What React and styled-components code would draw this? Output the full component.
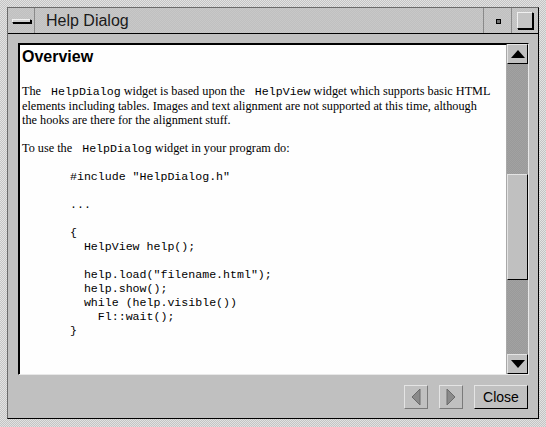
import React from 'react';
import styled, { createGlobalStyle } from 'styled-components';

const GlobalStyle = createGlobalStyle`
  html, body {
    margin: 0;
    padding: 0;
    background: #c0c0c0;
  }
`;

const stipple = (a, b) => `
  background-color: ${a};
  background-image: repeating-conic-gradient(${a} 0 25%, ${b} 0 50%);
  background-size: 2px 2px;
`;

const Frame = styled.div`
  width: 546px;
  height: 427px;
  box-sizing: border-box;
  padding: 7px 7px 8px 7px;
  ${stipple('#c4c4c4', '#e2e2e2')}
  display: flex;
`;

const Inner = styled.div`
  flex: 1;
  display: flex;
  flex-direction: column;
  border-top: 1px solid #6a6a6a;
  border-left: 1px solid #6a6a6a;
  border-right: 1px solid #000;
  border-bottom: 1px solid #000;
  background: #c0c0c0;
`;

const TitleBar = styled.div`
  height: 25px;
  display: flex;
  border-bottom: 1px solid #000;
  ${stipple('#c0c0c0', '#c8c8c8')}
`;

const TitleButton = styled.div`
  width: ${({ w }) => w}px;
  display: grid;
  place-items: center;
  border-left: ${({ left }) => (left ? '1px solid #8a8a8a' : 'none')};
  border-right: ${({ right }) => (right ? '1px solid #8a8a8a' : 'none')};
`;

const MenuBar = styled.div`
  width: 17px;
  height: 2px;
  background: #d0d0d0;
  border: 1px solid #000;
  border-top-color: #f0f0f0;
  border-left-color: #f0f0f0;
  box-shadow: 1px 1px 0 #000;
  margin-left: 1px;
`;

const Dot = styled.div`
  width: 3px;
  height: 3px;
  border: 1px solid #000;
  background: #707070;
  margin-left: 1px;
  margin-top: 1px;
`;

const MaxBox = styled.div`
  width: 14px;
  height: 15px;
  border: 1px solid #f0f0f0;
  border-right-color: #000;
  border-bottom-color: #000;
  box-shadow: 1px 1px 0 #000;
  background: #c4c4c4;
`;

const Title = styled.div`
  flex: 1;
  padding-left: 11px;
  font-family: 'Liberation Sans', Arial, sans-serif;
  font-size: 16px;
  line-height: 25px;
  color: #1a1a1a;
`;

const Client = styled.div`
  flex: 1;
  display: flex;
  flex-direction: column;
  padding: 9px 9px 9px 10px;
`;

const HelpView = styled.div`
  flex: 1;
  display: flex;
  border-top: 1px solid #000;
  border-left: 1px solid #000;
  border-right: 1px solid #e8e8e8;
  border-bottom: 1px solid #e8e8e8;
  min-height: 0;
`;

const Page = styled.div`
  flex: 1;
  background: #fefefe;
  border-top: 1px solid #000;
  border-left: 1px solid #000;
  border-right: 1px solid #a8a8a8;
  padding: 2px 0 0 2px;
  overflow: hidden;
  font-family: 'Liberation Serif', 'Times New Roman', serif;
  font-size: 12.25px;
  line-height: 14px;
  color: #000;
`;

const Heading = styled.h1`
  margin: 0 0 17px 0;
  font-family: 'Liberation Sans', Arial, sans-serif;
  font-size: 16px;
  font-weight: bold;
  line-height: 20px;
`;

const Para = styled.p`
  margin: 0 0 14px 0;
  white-space: nowrap;
`;

const Mono = styled.code`
  font-family: 'Liberation Mono', 'Courier New', monospace;
  font-size: 11.6px;
  white-space: pre;
`;

const Code = styled.pre`
  margin: 0 0 0 48px;
  font-family: 'Liberation Mono', 'Courier New', monospace;
  font-size: 11.6px;
  line-height: 14px;
`;

const ScrollBar = styled.div`
  width: 21px;
  display: flex;
  flex-direction: column;
  ${stipple('#a2a2a2', '#9a9a9a')}
`;

const ArrowButton = styled.div`
  height: 20px;
  box-sizing: border-box;
  display: grid;
  place-items: center;
  background: #c0c0c0;
  border-top: 1px solid #e4e4e4;
  border-left: 1px solid #e4e4e4;
  border-right: 1px solid #000;
  border-bottom: 1px solid #000;
`;

const Trough = styled.div`
  flex: 1;
`;

const Thumb = styled.div`
  height: 106px;
  box-sizing: border-box;
  background: #c0c0c0;
  border-top: 1px solid #e4e4e4;
  border-left: 1px solid #e4e4e4;
  border-right: 1px solid #000;
  border-bottom: 1px solid #000;
`;

const ButtonRow = styled.div`
  display: flex;
  justify-content: flex-end;
  gap: 11px;
  margin-top: 10px;
  padding-right: 1px;
`;

const Button = styled.button`
  height: 24px;
  width: ${({ w }) => w}px;
  box-sizing: border-box;
  padding: 0;
  display: grid;
  place-items: center;
  background: #c0c0c0;
  border-top: 1px solid #e4e4e4;
  border-left: 1px solid #e4e4e4;
  border-right: 1px solid ${({ disabled }) => (disabled ? '#7a7a7a' : '#000')};
  border-bottom: 1px solid ${({ disabled }) => (disabled ? '#7a7a7a' : '#000')};
  font-family: 'Liberation Sans', Arial, sans-serif;
  font-size: 14px;
  color: #000;
  border-radius: 0;
`;

const UpArrow = () => (
  <svg width="14" height="8" viewBox="0 0 14 8">
    <polygon points="7,0 14,8 0,8" fill="#000" />
  </svg>
);

const DownArrow = () => (
  <svg width="14" height="8" viewBox="0 0 14 8">
    <polygon points="0,0 14,0 7,8" fill="#000" />
  </svg>
);

const NavArrow = ({ dir }) => (
  <svg width="10" height="18" viewBox="0 0 10 18">
    {dir === 'left' ? (
      <polygon points="9,1 9,17 1,9" fill="#8a8a8a" stroke="#6a6a6a" strokeWidth="1" />
    ) : (
      <polygon points="1,1 1,17 9,9" fill="#8a8a8a" stroke="#6a6a6a" strokeWidth="1" />
    )}
  </svg>
);

const codeText = `#include "HelpDialog.h"

...

{
  HelpView help();

  help.load("filename.html");
  help.show();
  while (help.visible())
    Fl::wait();
}`;

export default function App() {
  return (
    <>
      <GlobalStyle />
      <Frame>
        <Inner>
          <TitleBar>
            <TitleButton w={26} right>
              <MenuBar />
            </TitleButton>
            <Title>Help Dialog</Title>
            <TitleButton w={27} left right>
              <Dot />
            </TitleButton>
            <TitleButton w={26}>
              <MaxBox />
            </TitleButton>
          </TitleBar>
          <Client>
            <HelpView>
              <Page>
                <Heading>Overview</Heading>
                <Para>
                  The <Mono> HelpDialog</Mono> widget is based upon the <Mono> HelpView</Mono> widget which supports basic HTML
                  <br />
                  elements including tables. Images and text alignment are not supported at this time, although
                  <br />
                  the hooks are there for the alignment stuff.
                </Para>
                <Para>
                  To use the <Mono> HelpDialog</Mono> widget in your program do:
                </Para>
                <Code>{codeText}</Code>
              </Page>
              <ScrollBar>
                <ArrowButton>
                  <UpArrow />
                </ArrowButton>
                <Trough>
                  <Thumb style={{ marginTop: 110 }} />
                </Trough>
                <ArrowButton>
                  <DownArrow />
                </ArrowButton>
              </ScrollBar>
            </HelpView>
            <ButtonRow>
              <Button w={24} disabled>
                <NavArrow dir="left" />
              </Button>
              <Button w={24} disabled>
                <NavArrow dir="right" />
              </Button>
              <Button w={54}>Close</Button>
            </ButtonRow>
          </Client>
        </Inner>
      </Frame>
    </>
  );
}
